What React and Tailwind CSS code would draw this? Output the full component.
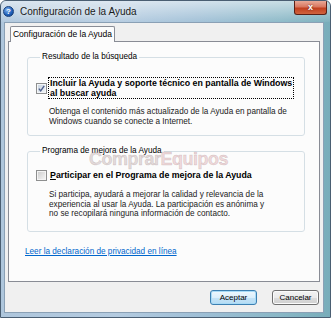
import React from "react";

const CheckBox = ({ checked }) => (
  <span
    className={`w-[11px] h-[11px] shrink-0 border border-[#8e8f8f] p-[1px] ${
      checked ? "bg-[#f4f6f8]" : "bg-[#f4f4f4]"
    }`}
  >
    <span
      className={`w-full h-full flex items-center justify-center ${
        checked
          ? "bg-[linear-gradient(135deg,#cbd6e2,#eef2f6)]"
          : "bg-[linear-gradient(135deg,#cfcfcf,#f3f3f3)]"
      }`}
    >
      {checked && (
        <svg width="7" height="7" viewBox="0 0 7 7">
          <path d="M0.8 3.6 L2.7 5.8 L6.2 0.8" fill="none" stroke="#4d5f8c" strokeWidth="1.4" />
        </svg>
      )}
    </span>
  </span>
);

const Boton = ({ children, primary }) => (
  <button
    className={`w-[47px] h-[15px] rounded-[3px] border text-[8px] leading-none text-black ${
      primary
        ? "border-[#3c7fb1] bg-[linear-gradient(180deg,#eef7fd_0%,#dceffb_50%,#c4e3f7_51%,#b6dcf4_100%)] shadow-[inset_0_0_0_1px_#a8dbf7]"
        : "border-[#707070] bg-[linear-gradient(180deg,#f2f2f2_0%,#ebebeb_50%,#dddddd_51%,#cfcfcf_100%)] shadow-[inset_0_0_0_1px_#fbfbfb]"
    }`}
  >
    {children}
  </button>
);

export default function App() {
  return (
    <div className="w-[331px] h-[318px] flex flex-col border border-[#4a5e72] rounded-t-[6px] overflow-hidden bg-[linear-gradient(90deg,#aec6dc_0%,#b4cbe0_35%,#9fbfd6_60%,#89b7c6_85%,#78adba_100%)] font-['Liberation_Sans',Arial,sans-serif] text-black relative">
      {/* barra de titulo */}
      <div className="h-[21px] flex items-start shrink-0 bg-[linear-gradient(180deg,rgba(255,255,255,0.55)_0%,rgba(255,255,255,0.25)_60%,rgba(255,255,255,0.05)_100%)]">
        <div className="flex items-center h-[21px] pl-[2px]">
          <span className="w-[11px] h-[11px] rounded-full bg-[radial-gradient(circle_at_35%_30%,#7fb0ee,#1f5fb8_60%,#123f86)] border border-[#173f7a] flex items-center justify-center text-white text-[8px] font-bold leading-none">
            ?
          </span>
          <span className="ml-[6px] text-[10px] leading-none text-[#1a1a1a] [text-shadow:0_0_6px_rgba(255,255,255,0.9)]">
            Configuración de la Ayuda
          </span>
        </div>
        <div className="ml-auto mr-[3px] w-[33px] h-[14px] rounded-b-[3px] border border-t-0 border-[#5b2016] bg-[linear-gradient(180deg,#e9a997_0%,#d9775f_45%,#c2401f_55%,#d0643f_100%)] flex items-center justify-center text-white text-[9px] font-bold leading-none [text-shadow:0_0_2px_#5b2016]">
          x
        </div>
      </div>

      {/* area de cliente */}
      <div className="ml-[3px] mr-[6px] mb-[4px] flex-1 border border-[#8aa0b5] bg-[#f0f0f0] flex flex-col px-[3px] pt-[3px]">
        <div className="flex pl-[2px]">
          <div className="relative z-10 -mb-px w-[105px] h-[16px] border border-b-0 border-[#898c95] rounded-t-[2px] bg-[#fcfcfc] flex items-center justify-center text-[8.5px] leading-none">
            Configuración de la Ayuda
          </div>
        </div>

        <div className="h-[241px] border border-[#898c95] bg-[#fcfcfc] flex flex-col pt-[10px] text-[8.2px] leading-[10px]">
          <fieldset className="ml-[18px] mr-[14px] border border-[#d5dfe5] rounded-[3px] pt-[15px] pb-[9px] pl-[8px]">
            <legend className="ml-[4px] px-[2px] leading-[10px]">Resultado de la búsqueda</legend>
            <div className="flex items-center gap-[1px]">
              <CheckBox checked />
              <span className="border border-dotted border-black px-[1px] font-bold text-[8.8px] leading-[10px] whitespace-nowrap">
                Incluir la Ayuda y soporte técnico en pantalla de Windows
                <br />
                al buscar ayuda
              </span>
            </div>
            <p className="mt-[8px] pl-[13px] leading-[9.5px] whitespace-nowrap text-[#222]">
              Obtenga el contenido más actualizado de la Ayuda en pantalla de
              <br />
              Windows cuando se conecte a Internet.
            </p>
          </fieldset>

          <fieldset className="mt-[10px] ml-[18px] mr-[14px] border border-[#d5dfe5] rounded-[3px] pt-[13px] pb-[12px] pl-[8px]">
            <legend className="ml-[4px] px-[2px] leading-[10px]">Programa de mejora de la Ayuda</legend>
            <div className="flex items-center gap-[1px]">
              <CheckBox />
              <span className="border border-transparent px-[1px] font-bold text-[8.8px] leading-[10px] whitespace-nowrap">
                <span className="underline">P</span>articipar en el Programa de mejora de la Ayuda
              </span>
            </div>
            <p className="mt-[9px] pl-[13px] leading-[9.5px] whitespace-nowrap text-[#222]">
              Si participa, ayudará a mejorar la calidad y relevancia de la
              <br />
              experiencia al usar la Ayuda. La participación es anónima y
              <br />
              no se recopilará ninguna información de contacto.
            </p>
          </fieldset>

          <a href="#" className="mt-[15px] ml-[16px] self-start text-[#0066cc] underline whitespace-nowrap">
            Leer la declaración de privacidad en línea
          </a>
        </div>

        <div className="flex justify-end gap-[15px] pr-[1px] mt-[8px]">
          <Boton primary>Aceptar</Boton>
          <Boton>Cancelar</Boton>
        </div>
      </div>

      {/* marca de agua */}
      <div aria-hidden="true" className="absolute left-[88px] top-[150px] text-[18px] font-bold leading-[16px] tracking-[-0.5px] text-[rgba(200,185,185,0.5)] [-webkit-text-stroke:0.5px_rgba(150,120,120,0.35)] pointer-events-none select-none">
        Comprar<span className="text-[rgba(225,180,185,0.5)]">Equipos</span>
      </div>
    </div>
  );
}
